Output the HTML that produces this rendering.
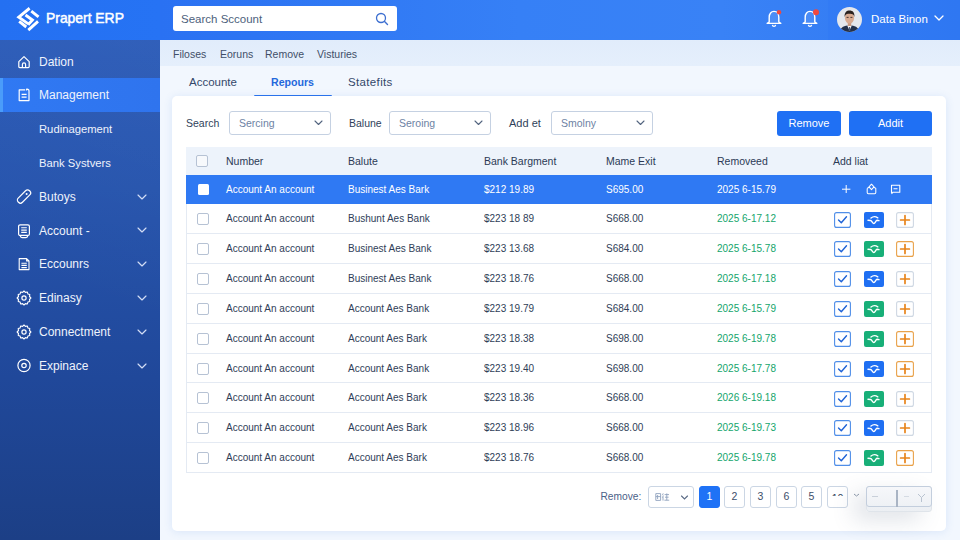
<!DOCTYPE html><html><head><meta charset="utf-8"><style>
*{margin:0;padding:0;box-sizing:border-box}
html,body{width:960px;height:540px;overflow:hidden;font-family:"Liberation Sans",sans-serif;background:#f2f7fe;position:relative}
.a{position:absolute}
#side{left:0;top:0;width:159.5px;height:540px;background:linear-gradient(200deg,rgba(255,255,255,.045),rgba(255,255,255,0) 55%),linear-gradient(180deg,#2a5bba 0%,#2654ad 35%,#20489a 70%,#1c3f86 100%)}
#logo{left:0;top:0;width:160px;height:40px;background:linear-gradient(90deg,#2470f2,#2673f4)}
#hdr{left:160px;top:0;width:800px;height:40px;background:linear-gradient(90deg,#2a71f2 0%,#3680f6 45%,#3982f6 70%,#3179f2 100%)}
.mi{position:absolute;left:0;width:160px;height:34px;color:#fff;font-size:12px}
.mi .t{position:absolute;left:39px;top:10px;line-height:14px;color:#eef3fc}
.mi svg.i{position:absolute;left:17px;top:10px}
.mi svg.chev{position:absolute;left:137px;top:13.8px}
#subnav{left:160px;top:40px;width:800px;height:26px;background:linear-gradient(180deg,#e1ecfb,#e5effc)}
.sn{position:absolute;top:47px;font-size:10.5px;color:#3f4e68;line-height:14px}
.tab{position:absolute;top:75px;font-size:11.5px;color:#34486a;line-height:14px}
#card{left:172px;top:96px;width:774px;height:435px;background:#fff;border-radius:5px;box-shadow:0 1px 8px rgba(70,130,220,.14)}
.lbl{position:absolute;font-size:10.5px;color:#2f3f5a;line-height:14px}
.sel{position:absolute;height:24px;border:1px solid #c5d1e2;border-radius:3px;background:#fff;font-size:10.5px;color:#6d82a3}
.sel span{position:absolute;left:9px;top:5px;line-height:13px}
.sel svg{position:absolute;right:7px;top:8px}
.btn{position:absolute;top:111px;height:25px;background:#1f70f4;border-radius:3px;color:#fff;font-size:11px;text-align:center;line-height:25px}
.th{position:absolute;left:186px;top:147px;width:746px;height:28px;background:#edf3fb}
.row{position:absolute;left:186px;width:746px;border-bottom:1px solid #e4eaf3;border-left:1px solid #e4eaf3;border-right:1px solid #e4eaf3}
.row.s{background:#2f79f3;border-color:#2f79f3}
.c{position:absolute;font-size:10px;line-height:12px;color:#2f3e58}
.row.s .c{color:#fff}
.cb{position:absolute;left:10px;width:12px;height:12px;border:1px solid #b6c2d4;border-radius:2px;background:#fff}
.g{color:#14a56c!important}
.ic{position:absolute;width:18px;height:17px;border-radius:3px}
.pg{position:absolute;top:485.5px;width:21px;height:22px;border:1px solid #cbd6e4;border-radius:3px;background:#fff;font-size:10.5px;color:#3d4e6a;text-align:center;line-height:19px}
</style></head><body>
<div id="side" class="a"></div>
<div id="logo" class="a"><svg class="a" style="left:15.7px;top:5px" width="26.1" height="28.9" viewBox="0 0 28 30" preserveAspectRatio="none"><g stroke="#fff" stroke-width="3.1" fill="none" stroke-linecap="butt" stroke-linejoin="miter"><path d="M14.6 3.4 L3 12.6 L13.2 19.6"/><path d="M16.4 6.4 L24.2 12.4"/><path d="M10.2 10.4 L17.6 15.6 L13 20.6"/><path d="M3.4 17 L11 22.8"/><path d="M23.6 17 L13.2 26.2"/></g></svg><div class="a" style="left:46px;top:8.3px;font-size:15px;font-weight:normal;-webkit-text-stroke:0.5px #fff;color:#fff;line-height:19px;transform:scaleX(0.925);transform-origin:0 0;white-space:nowrap">Prapert ERP</div></div>
<div id="hdr" class="a"></div>
<div class="a" style="left:173px;top:6px;width:224px;height:25px;background:#fff;border-radius:3px"><div class="a" style="left:8px;top:6px;font-size:11.5px;color:#4d5f7c;line-height:14px">Search Sccount</div><svg class="a" style="left:202px;top:6px" width="14" height="14" viewBox="0 0 14 14"><circle cx="6" cy="6" r="4.5" fill="none" stroke="#3d6fd0" stroke-width="1.3"/><path d="M9.3 9.3 L12.5 12.5" stroke="#3d6fd0" stroke-width="1.4" stroke-linecap="round"/></svg></div>
<svg class="a" style="left:765px;top:8px" width="18" height="20" viewBox="0 0 18 20"><path d="M4.2 14 V9.2 C4.2 5.6 6.2 3.4 9 3.4 C11.8 3.4 13.8 5.6 13.8 9.2 V14 L15.8 15.4 H2.2 Z" fill="rgba(255,255,255,.1)" stroke="#fff" stroke-width="1.4" stroke-linejoin="round"/><path d="M7.4 16.9 C7.6 18.9 10.4 18.9 10.6 16.9" fill="none" stroke="#fff" stroke-width="1.3"/><circle cx="14" cy="4.2" r="2.2" fill="#f0483e"/></svg>
<svg class="a" style="left:801px;top:8px" width="18" height="20" viewBox="0 0 18 20"><path d="M4.2 14 V9.2 C4.2 5.6 6.2 3.4 9 3.4 C11.8 3.4 13.8 5.6 13.8 9.2 V14 L15.8 15.4 H2.2 Z" fill="rgba(255,255,255,.1)" stroke="#fff" stroke-width="1.4" stroke-linejoin="round"/><path d="M7.4 16.9 C7.6 18.9 10.4 18.9 10.6 16.9" fill="none" stroke="#fff" stroke-width="1.3"/><circle cx="15" cy="4.2" r="3" fill="#f0483e"/></svg>
<div class="a" style="left:828px;top:0;width:132px;height:40px;background:rgba(30,110,245,.12)"></div>
<svg class="a" style="left:837px;top:7px" width="25" height="25" viewBox="0 0 25 25"><defs><clipPath id="av"><circle cx="12.5" cy="12.5" r="12.5"/></clipPath></defs><g clip-path="url(#av)"><rect width="25" height="25" fill="#e4e7ec"/><path d="M3 26 C3 20 7 18.5 12.5 18.5 C18 18.5 22 20 22 26 Z" fill="#22304a"/><path d="M10.2 18.6 L12.5 23.5 L14.8 18.6 Z" fill="#f4f4f6"/><path d="M12 20 L13 20 L13.3 24 L11.7 24 Z" fill="#4a5a78"/><rect x="10.8" y="15" width="3.4" height="4" fill="#c99a80"/><ellipse cx="12.5" cy="11" rx="4.6" ry="5.6" fill="#d8aa90"/><path d="M7.6 10 C7.4 5.5 9.5 3.6 12.6 3.6 C15.8 3.6 17.7 5.6 17.4 10 L16.6 8 C15.5 7 13.5 6.8 12.5 6.8 C10.5 6.8 9 7.2 8.4 8.2 Z" fill="#2a211e"/><path d="M9.6 10.4 H11.6 M13.4 10.4 H15.4" stroke="#3a2a26" stroke-width="0.9"/></g></svg>
<div class="a" style="left:871px;top:12px;font-size:11.5px;color:#fff;line-height:14px">Data Binon</div>
<svg class="a" style="left:934px;top:15px" width="10" height="6" viewBox="0 0 10 6"><path d="M1 1 L5 5 L9 1" fill="none" stroke="#fff" stroke-width="1.3" stroke-linecap="round" stroke-linejoin="round"/></svg>
<div class="mi" style="top:44.5px;"><svg class="i" style="top:10px" width="14" height="14" viewBox="0 0 14 14"><path d="M1.8 6.6 L7 1.6 L12.2 6.6 V11.6 Q12.2 12.6 11.2 12.6 H2.8 Q1.8 12.6 1.8 11.6 Z" fill="none" stroke="#fff" stroke-width="1.2" stroke-linejoin="round"/><path d="M5.4 12.6 V9.4 Q5.4 7.9 7 7.9 Q8.6 7.9 8.6 9.4 V12.6" fill="none" stroke="#fff" stroke-width="1.2"/></svg><div class="t">Dation</div></div>
<div class="mi" style="top:78.3px;background:linear-gradient(90deg,#3079f3,#2f74ee);"><div class="a" style="left:0;top:0;width:3px;height:34px;background:#4a9cfa"></div><svg class="i" style="top:10px" width="14" height="14" viewBox="0 0 14 14"><path d="M8.2 1.8 H2.2 V12.6 H12 V3 Q12 1.2 10.2 1.2 H9.6 V2.6" fill="none" stroke="#fff" stroke-width="1.2" stroke-linejoin="round"/><path d="M4.6 6.4 H9.6 M4.6 9.2 H9.6" stroke="#fff" stroke-width="1.2"/></svg><div class="t">Management</div></div>
<div class="mi" style="top:112.1px;"><div class="t" style="font-size:11.25px">Rudinagement</div></div>
<div class="mi" style="top:146.0px;"><div class="t" style="font-size:11.25px">Bank Systvers</div></div>
<div class="mi" style="top:179.8px;"><svg class="i" style="top:9px;left:16px" width="16" height="15" viewBox="0 0 16 15"><rect x="5" y="-0.5" width="6" height="16" rx="2.8" fill="none" stroke="#fff" stroke-width="1.2" transform="rotate(45 8 7.5)"/><circle cx="10.6" cy="4.9" r="1" fill="#fff"/></svg><div class="t">Butoys</div><svg class="chev" width="10" height="6" viewBox="0 0 10 6"><path d="M1 1 L5 5 L9 1" fill="none" stroke="#d3def5" stroke-width="1.15" stroke-linecap="round" stroke-linejoin="round"/></svg></div>
<div class="mi" style="top:213.6px;"><svg class="i" style="top:10px" width="14" height="15" viewBox="0 0 14 15"><rect x="1.6" y="0.8" width="10.8" height="10.6" rx="1.5" fill="none" stroke="#fff" stroke-width="1.2"/><path d="M4.2 3.8 H9.8 M4.2 6.1 H9.8 M4.2 8.4 H9.8" stroke="#fff" stroke-width="1.1"/><path d="M3 11.4 Q3.5 13.6 5 13.6 H9 Q10.5 13.6 11 11.4" fill="none" stroke="#fff" stroke-width="1.1"/></svg><div class="t">Account -</div><svg class="chev" width="10" height="6" viewBox="0 0 10 6"><path d="M1 1 L5 5 L9 1" fill="none" stroke="#d3def5" stroke-width="1.15" stroke-linecap="round" stroke-linejoin="round"/></svg></div>
<div class="mi" style="top:247.4px;"><svg class="i" style="top:10px" width="14" height="14" viewBox="0 0 14 14"><path d="M2.2 1.6 H9.6 L12 4 V12.6 H2.2 Z M9.6 1.6 V4 H12" fill="none" stroke="#fff" stroke-width="1.1" stroke-linejoin="round"/><path d="M4.4 6.2 H9.8 M4.4 8.4 H9.8 M4.4 10.6 H9.8" stroke="#fff" stroke-width="1.1"/></svg><div class="t">Eccounrs</div><svg class="chev" width="10" height="6" viewBox="0 0 10 6"><path d="M1 1 L5 5 L9 1" fill="none" stroke="#d3def5" stroke-width="1.15" stroke-linecap="round" stroke-linejoin="round"/></svg></div>
<div class="mi" style="top:281.2px;"><svg class="i" style="top:8.5px;left:16px" width="16" height="16" viewBox="0 0 16 16"><path d="M8 1 L9.4 2.4 L11.3 2 L11.9 3.9 L13.8 4.6 L13.5 6.5 L14.9 8 L13.5 9.5 L13.8 11.4 L11.9 12.1 L11.3 14 L9.4 13.6 L8 15 L6.6 13.6 L4.7 14 L4.1 12.1 L2.2 11.4 L2.5 9.5 L1.1 8 L2.5 6.5 L2.2 4.6 L4.1 3.9 L4.7 2 L6.6 2.4 Z" fill="none" stroke="#fff" stroke-width="1.1" stroke-linejoin="round"/><circle cx="8" cy="8" r="2.1" fill="none" stroke="#fff" stroke-width="1.2"/></svg><div class="t">Edinasy</div><svg class="chev" width="10" height="6" viewBox="0 0 10 6"><path d="M1 1 L5 5 L9 1" fill="none" stroke="#d3def5" stroke-width="1.15" stroke-linecap="round" stroke-linejoin="round"/></svg></div>
<div class="mi" style="top:315.1px;"><svg class="i" style="top:8.5px;left:16px" width="16" height="16" viewBox="0 0 16 16"><path d="M8 1 L9.4 2.4 L11.3 2 L11.9 3.9 L13.8 4.6 L13.5 6.5 L14.9 8 L13.5 9.5 L13.8 11.4 L11.9 12.1 L11.3 14 L9.4 13.6 L8 15 L6.6 13.6 L4.7 14 L4.1 12.1 L2.2 11.4 L2.5 9.5 L1.1 8 L2.5 6.5 L2.2 4.6 L4.1 3.9 L4.7 2 L6.6 2.4 Z" fill="none" stroke="#fff" stroke-width="1.1" stroke-linejoin="round"/><circle cx="8" cy="8" r="2.1" fill="none" stroke="#fff" stroke-width="1.2"/></svg><div class="t">Connectment</div><svg class="chev" width="10" height="6" viewBox="0 0 10 6"><path d="M1 1 L5 5 L9 1" fill="none" stroke="#d3def5" stroke-width="1.15" stroke-linecap="round" stroke-linejoin="round"/></svg></div>
<div class="mi" style="top:348.9px;"><svg class="i" style="top:9.5px" width="15" height="15" viewBox="0 0 15 15"><circle cx="7" cy="7.5" r="6.1" fill="none" stroke="#fff" stroke-width="1.2"/><circle cx="7" cy="7.5" r="2.2" fill="none" stroke="#fff" stroke-width="1.2"/></svg><div class="t">Expinace</div><svg class="chev" width="10" height="6" viewBox="0 0 10 6"><path d="M1 1 L5 5 L9 1" fill="none" stroke="#d3def5" stroke-width="1.15" stroke-linecap="round" stroke-linejoin="round"/></svg></div>
<div id="subnav" class="a"></div>
<div class="sn" style="left:173px">Filoses</div>
<div class="sn" style="left:220px">Eoruns</div>
<div class="sn" style="left:265px">Remove</div>
<div class="sn" style="left:317px">Visturies</div>
<div class="tab" style="left:189px">Accounte</div>
<div class="tab" style="left:271px;color:#2468dc;font-weight:bold;font-size:10.6px">Repours</div>
<div class="tab" style="left:348px;letter-spacing:0.35px">Statefits</div>
<div class="a" style="left:253.5px;top:94.5px;width:78px;height:2px;border-radius:1px;background:#2a72ec"></div>
<div id="card" class="a"></div>
<div class="lbl" style="left:186px;top:116px">Search</div>
<div class="sel" style="left:229px;top:111px;width:102px"><span>Sercing</span><svg width="9" height="6" viewBox="0 0 9 6"><path d="M1 1 L4.5 4.5 L8 1" fill="none" stroke="#53647f" stroke-width="1.1" stroke-linecap="round" stroke-linejoin="round"/></svg></div>
<div class="lbl" style="left:349px;top:116px">Balune</div>
<div class="sel" style="left:389px;top:111px;width:102px"><span>Seroing</span><svg width="9" height="6" viewBox="0 0 9 6"><path d="M1 1 L4.5 4.5 L8 1" fill="none" stroke="#53647f" stroke-width="1.1" stroke-linecap="round" stroke-linejoin="round"/></svg></div>
<div class="lbl" style="left:509px;top:116px;font-size:11px">Add et</div>
<div class="sel" style="left:551px;top:111px;width:102px"><span>Smolny</span><svg width="9" height="6" viewBox="0 0 9 6"><path d="M1 1 L4.5 4.5 L8 1" fill="none" stroke="#53647f" stroke-width="1.1" stroke-linecap="round" stroke-linejoin="round"/></svg></div>
<div class="btn" style="left:777px;width:64px">Remove</div>
<div class="btn" style="left:849px;width:83px">Addit</div>
<div class="th"><div class="cb" style="top:8px;background:#f7f9fc"></div><div class="c" style="left:40px;top:8px;font-size:10.5px;color:#2b3a55">Number</div><div class="c" style="left:162px;top:8px;font-size:10.5px;color:#2b3a55">Balute</div><div class="c" style="left:298px;top:8px;font-size:10.5px;color:#2b3a55">Bank Bargment</div><div class="c" style="left:420px;top:8px;font-size:10.5px;color:#2b3a55">Mame Exit</div><div class="c" style="left:531px;top:8px;font-size:10.5px;color:#2b3a55">Removeed</div><div class="c" style="left:647px;top:8px;font-size:10.5px;color:#2b3a55">Add liat</div></div>
<div class="row s" style="top:175.00px;height:29.00px"><div class="a" style="left:11px;top:9px;width:11px;height:11px;border-radius:1.5px;background:#fff"></div><div class="c" style="left:39px;top:9px">Account An account</div><div class="c" style="left:161px;top:9px">Businest Aes Bark</div><div class="c" style="left:297px;top:9px">$212 19.89</div><div class="c" style="left:419px;top:9px">S695.00</div><div class="c" style="left:530px;top:9px">2025 6-15.79</div><svg class="a" style="left:654px;top:9px" width="10" height="10" viewBox="0 0 10 10"><path d="M5.2 1 V9 M1 5.2 H9.4" stroke="#fff" stroke-width="1"/></svg><svg class="a" style="left:679px;top:8px" width="11" height="12" viewBox="0 0 11 12"><path d="M1.2 5.4 V9.6 Q1.2 10.8 2.4 10.8 H8.6 Q9.8 10.8 9.8 9.6 V5.4 L8 4.2 M1.2 5.4 L3 4.2 M5.5 1.2 L8 3.9 L5.5 6.6 L3 3.9 Z" fill="none" stroke="#fff" stroke-width="1.05" stroke-linejoin="round"/></svg><svg class="a" style="left:703px;top:9px" width="11" height="11" viewBox="0 0 11 11"><path d="M1.5 9 V1.2 H9.8 V8.2 H3 L1.5 9.8 M3.5 4.8 H7.5" fill="none" stroke="#fff" stroke-width="1.1" stroke-linejoin="round"/></svg></div>
<div class="row" style="top:204.40px;height:29.83px"><div class="cb" style="top:9px"></div><div class="c" style="left:39px;top:9px">Account An account</div><div class="c" style="left:161px;top:9px">Bushunt Aes Bank</div><div class="c" style="left:297px;top:9px">$223 18 89</div><div class="c" style="left:419px;top:9px">S668.00</div><div class="c g" style="left:530px;top:9px">2025 6-17.12</div><div class="a" style="left:647px;top:7.2px;width:17px;height:16px"><svg width="17" height="16" viewBox="0 0 17 16"><rect x="0.6" y="0.6" width="15.8" height="14.8" rx="2" fill="#fff" stroke="#4f8ee8" stroke-width="1.1"/><path d="M4.5 8 L7.3 10.8 L12.5 4.8" fill="none" stroke="#1f63d6" stroke-width="1.4" stroke-linecap="round" stroke-linejoin="round"/></svg></div><div class="a" style="left:677px;top:7.2px;width:20px;height:16px"><svg width="20" height="16" viewBox="0 0 20 16"><rect x="0" y="0" width="20" height="16" rx="2" fill="#1f6ff2"/><path d="M7 6 Q10.2 3.4 13.8 5.8 M4 8.3 L6.5 8.5 C8 8.7 8.5 11.6 9.8 11.6 C11.2 11.6 11.8 8.3 13 8.3 L15 8.6" fill="none" stroke="#fff" stroke-width="1.4" stroke-linecap="round"/></svg></div><div class="a" style="left:709px;top:7.2px;width:18px;height:16px"><svg width="18" height="16" viewBox="0 0 18 16"><rect x="0.6" y="0.6" width="16.8" height="14.8" rx="2" fill="#fff" stroke="#cfd8e3" stroke-width="1.1"/><path d="M9 3.6 V12.4 M4.6 8 H13.4" fill="none" stroke="#e8841a" stroke-width="1.7" stroke-linecap="round"/></svg></div></div>
<div class="row" style="top:234.23px;height:29.83px"><div class="cb" style="top:9px"></div><div class="c" style="left:39px;top:9px">Account An account</div><div class="c" style="left:161px;top:9px">Businest Aes Bank</div><div class="c" style="left:297px;top:9px">$223 13.68</div><div class="c" style="left:419px;top:9px">S684.00</div><div class="c g" style="left:530px;top:9px">2025 6-15.78</div><div class="a" style="left:647px;top:7.2px;width:17px;height:16px"><svg width="17" height="16" viewBox="0 0 17 16"><rect x="0.6" y="0.6" width="15.8" height="14.8" rx="2" fill="#fff" stroke="#4f8ee8" stroke-width="1.1"/><path d="M4.5 8 L7.3 10.8 L12.5 4.8" fill="none" stroke="#1f63d6" stroke-width="1.4" stroke-linecap="round" stroke-linejoin="round"/></svg></div><div class="a" style="left:677px;top:7.2px;width:20px;height:16px"><svg width="20" height="16" viewBox="0 0 20 16"><rect x="0" y="0" width="20" height="16" rx="2" fill="#18af78"/><path d="M7 6 Q10.2 3.4 13.8 5.8 M4 8.3 L6.5 8.5 C8 8.7 8.5 11.6 9.8 11.6 C11.2 11.6 11.8 8.3 13 8.3 L15 8.6" fill="none" stroke="#fff" stroke-width="1.4" stroke-linecap="round"/></svg></div><div class="a" style="left:709px;top:7.2px;width:18px;height:16px"><svg width="18" height="16" viewBox="0 0 18 16"><rect x="0.6" y="0.6" width="16.8" height="14.8" rx="2" fill="#fff" stroke="#e9a24a" stroke-width="1.1"/><path d="M9 3.6 V12.4 M4.6 8 H13.4" fill="none" stroke="#e8841a" stroke-width="1.7" stroke-linecap="round"/></svg></div></div>
<div class="row" style="top:264.06px;height:29.83px"><div class="cb" style="top:9px"></div><div class="c" style="left:39px;top:9px">Account An account</div><div class="c" style="left:161px;top:9px">Businest Aes Bank</div><div class="c" style="left:297px;top:9px">$223 18.76</div><div class="c" style="left:419px;top:9px">S668.00</div><div class="c g" style="left:530px;top:9px">2025 6-17.18</div><div class="a" style="left:647px;top:7.2px;width:17px;height:16px"><svg width="17" height="16" viewBox="0 0 17 16"><rect x="0.6" y="0.6" width="15.8" height="14.8" rx="2" fill="#fff" stroke="#4f8ee8" stroke-width="1.1"/><path d="M4.5 8 L7.3 10.8 L12.5 4.8" fill="none" stroke="#1f63d6" stroke-width="1.4" stroke-linecap="round" stroke-linejoin="round"/></svg></div><div class="a" style="left:677px;top:7.2px;width:20px;height:16px"><svg width="20" height="16" viewBox="0 0 20 16"><rect x="0" y="0" width="20" height="16" rx="2" fill="#1f6ff2"/><path d="M7 6 Q10.2 3.4 13.8 5.8 M4 8.3 L6.5 8.5 C8 8.7 8.5 11.6 9.8 11.6 C11.2 11.6 11.8 8.3 13 8.3 L15 8.6" fill="none" stroke="#fff" stroke-width="1.4" stroke-linecap="round"/></svg></div><div class="a" style="left:709px;top:7.2px;width:18px;height:16px"><svg width="18" height="16" viewBox="0 0 18 16"><rect x="0.6" y="0.6" width="16.8" height="14.8" rx="2" fill="#fff" stroke="#cfd8e3" stroke-width="1.1"/><path d="M9 3.6 V12.4 M4.6 8 H13.4" fill="none" stroke="#e8841a" stroke-width="1.7" stroke-linecap="round"/></svg></div></div>
<div class="row" style="top:293.89px;height:29.83px"><div class="cb" style="top:9px"></div><div class="c" style="left:39px;top:9px">Account An account</div><div class="c" style="left:161px;top:9px">Account Aes Bank</div><div class="c" style="left:297px;top:9px">$223 19.79</div><div class="c" style="left:419px;top:9px">S684.00</div><div class="c g" style="left:530px;top:9px">2025 6-15.79</div><div class="a" style="left:647px;top:7.2px;width:17px;height:16px"><svg width="17" height="16" viewBox="0 0 17 16"><rect x="0.6" y="0.6" width="15.8" height="14.8" rx="2" fill="#fff" stroke="#4f8ee8" stroke-width="1.1"/><path d="M4.5 8 L7.3 10.8 L12.5 4.8" fill="none" stroke="#1f63d6" stroke-width="1.4" stroke-linecap="round" stroke-linejoin="round"/></svg></div><div class="a" style="left:677px;top:7.2px;width:20px;height:16px"><svg width="20" height="16" viewBox="0 0 20 16"><rect x="0" y="0" width="20" height="16" rx="2" fill="#18af78"/><path d="M7 6 Q10.2 3.4 13.8 5.8 M4 8.3 L6.5 8.5 C8 8.7 8.5 11.6 9.8 11.6 C11.2 11.6 11.8 8.3 13 8.3 L15 8.6" fill="none" stroke="#fff" stroke-width="1.4" stroke-linecap="round"/></svg></div><div class="a" style="left:709px;top:7.2px;width:18px;height:16px"><svg width="18" height="16" viewBox="0 0 18 16"><rect x="0.6" y="0.6" width="16.8" height="14.8" rx="2" fill="#fff" stroke="#cfd8e3" stroke-width="1.1"/><path d="M9 3.6 V12.4 M4.6 8 H13.4" fill="none" stroke="#e8841a" stroke-width="1.7" stroke-linecap="round"/></svg></div></div>
<div class="row" style="top:323.72px;height:29.83px"><div class="cb" style="top:9px"></div><div class="c" style="left:39px;top:9px">Account An account</div><div class="c" style="left:161px;top:9px">Account Aes Bark</div><div class="c" style="left:297px;top:9px">$223 18.38</div><div class="c" style="left:419px;top:9px">S698.00</div><div class="c g" style="left:530px;top:9px">2025 6-19.78</div><div class="a" style="left:647px;top:7.2px;width:17px;height:16px"><svg width="17" height="16" viewBox="0 0 17 16"><rect x="0.6" y="0.6" width="15.8" height="14.8" rx="2" fill="#fff" stroke="#4f8ee8" stroke-width="1.1"/><path d="M4.5 8 L7.3 10.8 L12.5 4.8" fill="none" stroke="#1f63d6" stroke-width="1.4" stroke-linecap="round" stroke-linejoin="round"/></svg></div><div class="a" style="left:677px;top:7.2px;width:20px;height:16px"><svg width="20" height="16" viewBox="0 0 20 16"><rect x="0" y="0" width="20" height="16" rx="2" fill="#18af78"/><path d="M7 6 Q10.2 3.4 13.8 5.8 M4 8.3 L6.5 8.5 C8 8.7 8.5 11.6 9.8 11.6 C11.2 11.6 11.8 8.3 13 8.3 L15 8.6" fill="none" stroke="#fff" stroke-width="1.4" stroke-linecap="round"/></svg></div><div class="a" style="left:709px;top:7.2px;width:18px;height:16px"><svg width="18" height="16" viewBox="0 0 18 16"><rect x="0.6" y="0.6" width="16.8" height="14.8" rx="2" fill="#fff" stroke="#e9a24a" stroke-width="1.1"/><path d="M9 3.6 V12.4 M4.6 8 H13.4" fill="none" stroke="#e8841a" stroke-width="1.7" stroke-linecap="round"/></svg></div></div>
<div class="row" style="top:353.55px;height:29.83px"><div class="cb" style="top:9px"></div><div class="c" style="left:39px;top:9px">Account An account</div><div class="c" style="left:161px;top:9px">Account Aes Bank</div><div class="c" style="left:297px;top:9px">$223 19.40</div><div class="c" style="left:419px;top:9px">S698.00</div><div class="c g" style="left:530px;top:9px">2025 6-17.78</div><div class="a" style="left:647px;top:7.2px;width:17px;height:16px"><svg width="17" height="16" viewBox="0 0 17 16"><rect x="0.6" y="0.6" width="15.8" height="14.8" rx="2" fill="#fff" stroke="#4f8ee8" stroke-width="1.1"/><path d="M4.5 8 L7.3 10.8 L12.5 4.8" fill="none" stroke="#1f63d6" stroke-width="1.4" stroke-linecap="round" stroke-linejoin="round"/></svg></div><div class="a" style="left:677px;top:7.2px;width:20px;height:16px"><svg width="20" height="16" viewBox="0 0 20 16"><rect x="0" y="0" width="20" height="16" rx="2" fill="#1f6ff2"/><path d="M7 6 Q10.2 3.4 13.8 5.8 M4 8.3 L6.5 8.5 C8 8.7 8.5 11.6 9.8 11.6 C11.2 11.6 11.8 8.3 13 8.3 L15 8.6" fill="none" stroke="#fff" stroke-width="1.4" stroke-linecap="round"/></svg></div><div class="a" style="left:709px;top:7.2px;width:18px;height:16px"><svg width="18" height="16" viewBox="0 0 18 16"><rect x="0.6" y="0.6" width="16.8" height="14.8" rx="2" fill="#fff" stroke="#e9a24a" stroke-width="1.1"/><path d="M9 3.6 V12.4 M4.6 8 H13.4" fill="none" stroke="#e8841a" stroke-width="1.7" stroke-linecap="round"/></svg></div></div>
<div class="row" style="top:383.38px;height:29.83px"><div class="cb" style="top:9px"></div><div class="c" style="left:39px;top:9px">Account An account</div><div class="c" style="left:161px;top:9px">Account Aes Bark</div><div class="c" style="left:297px;top:9px">$223 18.36</div><div class="c" style="left:419px;top:9px">S668.00</div><div class="c g" style="left:530px;top:9px">2026 6-19.18</div><div class="a" style="left:647px;top:7.2px;width:17px;height:16px"><svg width="17" height="16" viewBox="0 0 17 16"><rect x="0.6" y="0.6" width="15.8" height="14.8" rx="2" fill="#fff" stroke="#4f8ee8" stroke-width="1.1"/><path d="M4.5 8 L7.3 10.8 L12.5 4.8" fill="none" stroke="#1f63d6" stroke-width="1.4" stroke-linecap="round" stroke-linejoin="round"/></svg></div><div class="a" style="left:677px;top:7.2px;width:20px;height:16px"><svg width="20" height="16" viewBox="0 0 20 16"><rect x="0" y="0" width="20" height="16" rx="2" fill="#18af78"/><path d="M7 6 Q10.2 3.4 13.8 5.8 M4 8.3 L6.5 8.5 C8 8.7 8.5 11.6 9.8 11.6 C11.2 11.6 11.8 8.3 13 8.3 L15 8.6" fill="none" stroke="#fff" stroke-width="1.4" stroke-linecap="round"/></svg></div><div class="a" style="left:709px;top:7.2px;width:18px;height:16px"><svg width="18" height="16" viewBox="0 0 18 16"><rect x="0.6" y="0.6" width="16.8" height="14.8" rx="2" fill="#fff" stroke="#cfd8e3" stroke-width="1.1"/><path d="M9 3.6 V12.4 M4.6 8 H13.4" fill="none" stroke="#e8841a" stroke-width="1.7" stroke-linecap="round"/></svg></div></div>
<div class="row" style="top:413.21px;height:29.83px"><div class="cb" style="top:9px"></div><div class="c" style="left:39px;top:9px">Account An account</div><div class="c" style="left:161px;top:9px">Account Aes Bark</div><div class="c" style="left:297px;top:9px">$223 18.96</div><div class="c" style="left:419px;top:9px">S668.00</div><div class="c g" style="left:530px;top:9px">2025 6-19.73</div><div class="a" style="left:647px;top:7.2px;width:17px;height:16px"><svg width="17" height="16" viewBox="0 0 17 16"><rect x="0.6" y="0.6" width="15.8" height="14.8" rx="2" fill="#fff" stroke="#4f8ee8" stroke-width="1.1"/><path d="M4.5 8 L7.3 10.8 L12.5 4.8" fill="none" stroke="#1f63d6" stroke-width="1.4" stroke-linecap="round" stroke-linejoin="round"/></svg></div><div class="a" style="left:677px;top:7.2px;width:20px;height:16px"><svg width="20" height="16" viewBox="0 0 20 16"><rect x="0" y="0" width="20" height="16" rx="2" fill="#1f6ff2"/><path d="M7 6 Q10.2 3.4 13.8 5.8 M4 8.3 L6.5 8.5 C8 8.7 8.5 11.6 9.8 11.6 C11.2 11.6 11.8 8.3 13 8.3 L15 8.6" fill="none" stroke="#fff" stroke-width="1.4" stroke-linecap="round"/></svg></div><div class="a" style="left:709px;top:7.2px;width:18px;height:16px"><svg width="18" height="16" viewBox="0 0 18 16"><rect x="0.6" y="0.6" width="16.8" height="14.8" rx="2" fill="#fff" stroke="#cfd8e3" stroke-width="1.1"/><path d="M9 3.6 V12.4 M4.6 8 H13.4" fill="none" stroke="#e8841a" stroke-width="1.7" stroke-linecap="round"/></svg></div></div>
<div class="row" style="top:443.04px;height:29.83px"><div class="cb" style="top:9px"></div><div class="c" style="left:39px;top:9px">Account An account</div><div class="c" style="left:161px;top:9px">Account Aes Bark</div><div class="c" style="left:297px;top:9px">$223 18.76</div><div class="c" style="left:419px;top:9px">S668.00</div><div class="c g" style="left:530px;top:9px">2025 6-19.78</div><div class="a" style="left:647px;top:7.2px;width:17px;height:16px"><svg width="17" height="16" viewBox="0 0 17 16"><rect x="0.6" y="0.6" width="15.8" height="14.8" rx="2" fill="#fff" stroke="#4f8ee8" stroke-width="1.1"/><path d="M4.5 8 L7.3 10.8 L12.5 4.8" fill="none" stroke="#1f63d6" stroke-width="1.4" stroke-linecap="round" stroke-linejoin="round"/></svg></div><div class="a" style="left:677px;top:7.2px;width:20px;height:16px"><svg width="20" height="16" viewBox="0 0 20 16"><rect x="0" y="0" width="20" height="16" rx="2" fill="#18af78"/><path d="M7 6 Q10.2 3.4 13.8 5.8 M4 8.3 L6.5 8.5 C8 8.7 8.5 11.6 9.8 11.6 C11.2 11.6 11.8 8.3 13 8.3 L15 8.6" fill="none" stroke="#fff" stroke-width="1.4" stroke-linecap="round"/></svg></div><div class="a" style="left:709px;top:7.2px;width:18px;height:16px"><svg width="18" height="16" viewBox="0 0 18 16"><rect x="0.6" y="0.6" width="16.8" height="14.8" rx="2" fill="#fff" stroke="#e9a24a" stroke-width="1.1"/><path d="M9 3.6 V12.4 M4.6 8 H13.4" fill="none" stroke="#e8841a" stroke-width="1.7" stroke-linecap="round"/></svg></div></div>
<div class="a" style="left:600.5px;top:491px;font-size:10.2px;color:#4b6188;line-height:12px">Remove:</div>
<div class="a" style="left:648px;top:485.5px;width:46px;height:22px;border:1px solid #cbd6e4;border-radius:3px;background:#fff"><svg class="a" style="left:5.6px;top:6.8px" width="15" height="8" viewBox="0 0 15 8"><g fill="none" stroke="#8ea1bd" stroke-width="0.9"><path d="M0.8 0.6 H5.6 V7.4 H0.8 Z M0.8 3.6 H5.6 M2.6 2 V6"/><path d="M8.2 0.4 L7.4 2.2 M8.4 2.6 L7.4 4.6 M8 3.8 V7.6 M9.6 1.6 H14 M11.8 0.4 V7.2 M10 4.2 H13.6 M9.4 7.2 H14.2"/></g></svg><svg class="a" style="left:31px;top:8px" width="9" height="6" viewBox="0 0 9 6"><path d="M1.5 1 L4.5 4 L7.5 1" fill="none" stroke="#5b6c86" stroke-width="1.1" stroke-linecap="round"/></svg></div>
<div class="pg" style="left:699px;background:#1f72f6;border-color:#1f72f6;color:#fff">1</div>
<div class="pg" style="left:724px">2</div>
<div class="pg" style="left:750px">3</div>
<div class="pg" style="left:776px">6</div>
<div class="pg" style="left:801px">5</div>
<div class="pg" style="left:827px;width:21px;overflow:hidden"><div class="a" style="left:0;top:5px;width:19px;height:4px;overflow:hidden"><div style="font-size:10.5px;line-height:12px;color:#2f3e58;text-align:center">10</div></div></div>
<div class="a" style="left:866px;top:486px;width:66px;height:26px;border:1px solid #dfe4ea;border-radius:3px;background:linear-gradient(180deg,#f4f6f9,#eceff3);box-shadow:-12px 8px 22px rgba(70,90,120,.17)"></div>
<div class="a" style="left:866px;top:486px;width:66px;height:21px;border:1px solid #c3cedd;border-radius:3px;background:linear-gradient(180deg,#f6f7fa,#eef1f5)"><div class="a" style="left:5px;top:9px;width:6px;height:1px;background:#c9d0da"></div><div class="a" style="left:29px;top:3px;width:2px;height:17px;background:#a9b4c4"></div><div class="a" style="left:37px;top:9px;width:5px;height:1px;background:#d5dbe3"></div><svg class="a" style="left:50px;top:6px" width="9" height="10" viewBox="0 0 9 10"><path d="M1 1 L4.5 4.5 L8 1 M4.5 4.5 V9" fill="none" stroke="#b9c3d0" stroke-width="1"/></svg></div>
<svg class="a" style="left:853px;top:493px" width="7" height="4" viewBox="0 0 7 4"><path d="M1 1 L3.5 3 L6 1" fill="none" stroke="#8b97a8" stroke-width="1"/></svg>
</body></html>
